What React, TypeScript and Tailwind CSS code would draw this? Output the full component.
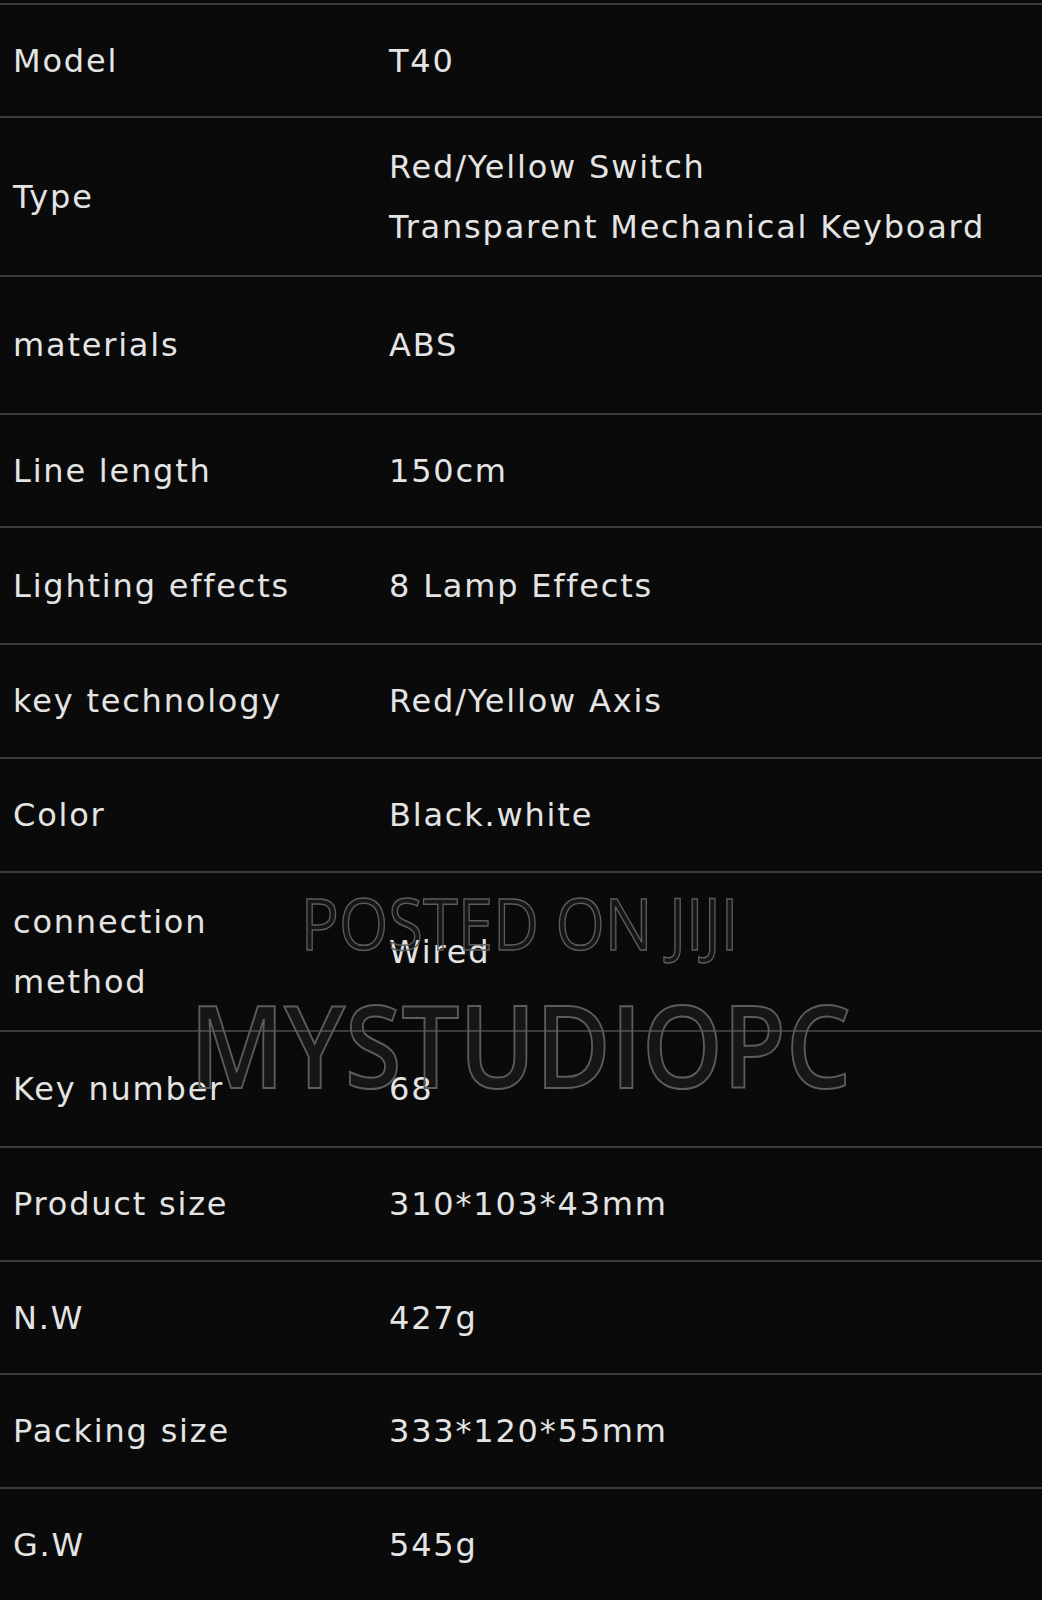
import React from "react";

const rows: { label: string[]; value: string[]; h: string }[] = [
  { label: ["Model"], value: ["T40"], h: "h-[113px]" },
  { label: ["Type"], value: ["Red/Yellow Switch", "Transparent Mechanical Keyboard"], h: "h-[159px]" },
  { label: ["materials"], value: ["ABS"], h: "h-[138px]" },
  { label: ["Line length"], value: ["150cm"], h: "h-[113px]" },
  { label: ["Lighting effects"], value: ["8 Lamp Effects"], h: "h-[117px]" },
  { label: ["key technology"], value: ["Red/Yellow Axis"], h: "h-[114px]" },
  { label: ["Color"], value: ["Black.white"], h: "h-[114px]" },
  { label: ["connection", "method"], value: ["Wired"], h: "h-[159px]" },
  { label: ["Key number"], value: ["68"], h: "h-[116px]" },
  { label: ["Product size"], value: ["310*103*43mm"], h: "h-[114px]" },
  { label: ["N.W"], value: ["427g"], h: "h-[113px]" },
  { label: ["Packing size"], value: ["333*120*55mm"], h: "h-[114px]" },
  { label: ["G.W"], value: ["545g"], h: "h-[113px]" },
];

export default function App() {
  return (
    <div className="relative w-[1042px] h-[1600px] overflow-hidden bg-[#0a0a0a] pt-[3px] text-[#e4e4e4] font-['DejaVu_Sans',sans-serif]">
      {rows.map((r, i) => (
        <div
          key={i}
          className={`grid grid-cols-[389px_1fr] items-center border-t-2 border-[#3a3a3a] ${r.h}`}
        >
          <div className="pl-[13px] text-[32px] leading-[60px] tracking-[1.8px]">
            {r.label.map((l, j) => (
              <div key={j}>{l}</div>
            ))}
          </div>
          <div className="text-[32px] leading-[60px] tracking-[1.8px]">
            {r.value.map((v, j) => (
              <div key={j}>{v}</div>
            ))}
          </div>
        </div>
      ))}
      <div className="absolute left-[300px] top-[877px] w-[440px] flex justify-center pointer-events-none">
        <div className="font-['Open_Sans',sans-serif] font-normal text-[72px] leading-[90px] whitespace-nowrap text-white/5 [-webkit-text-stroke:1.5px_#5c5c5c] scale-x-[0.88]">
          POSTED ON JIJI
        </div>
      </div>
      <div className="absolute left-[192px] top-[974px] w-[656px] flex justify-center pointer-events-none">
        <div className="font-['Open_Sans',sans-serif] font-semibold text-[114px] leading-[140px] whitespace-nowrap text-white/5 [-webkit-text-stroke:2px_#5c5c5c] scale-x-[0.9]">
          MYSTUDIOPC
        </div>
      </div>
    </div>
  );
}
